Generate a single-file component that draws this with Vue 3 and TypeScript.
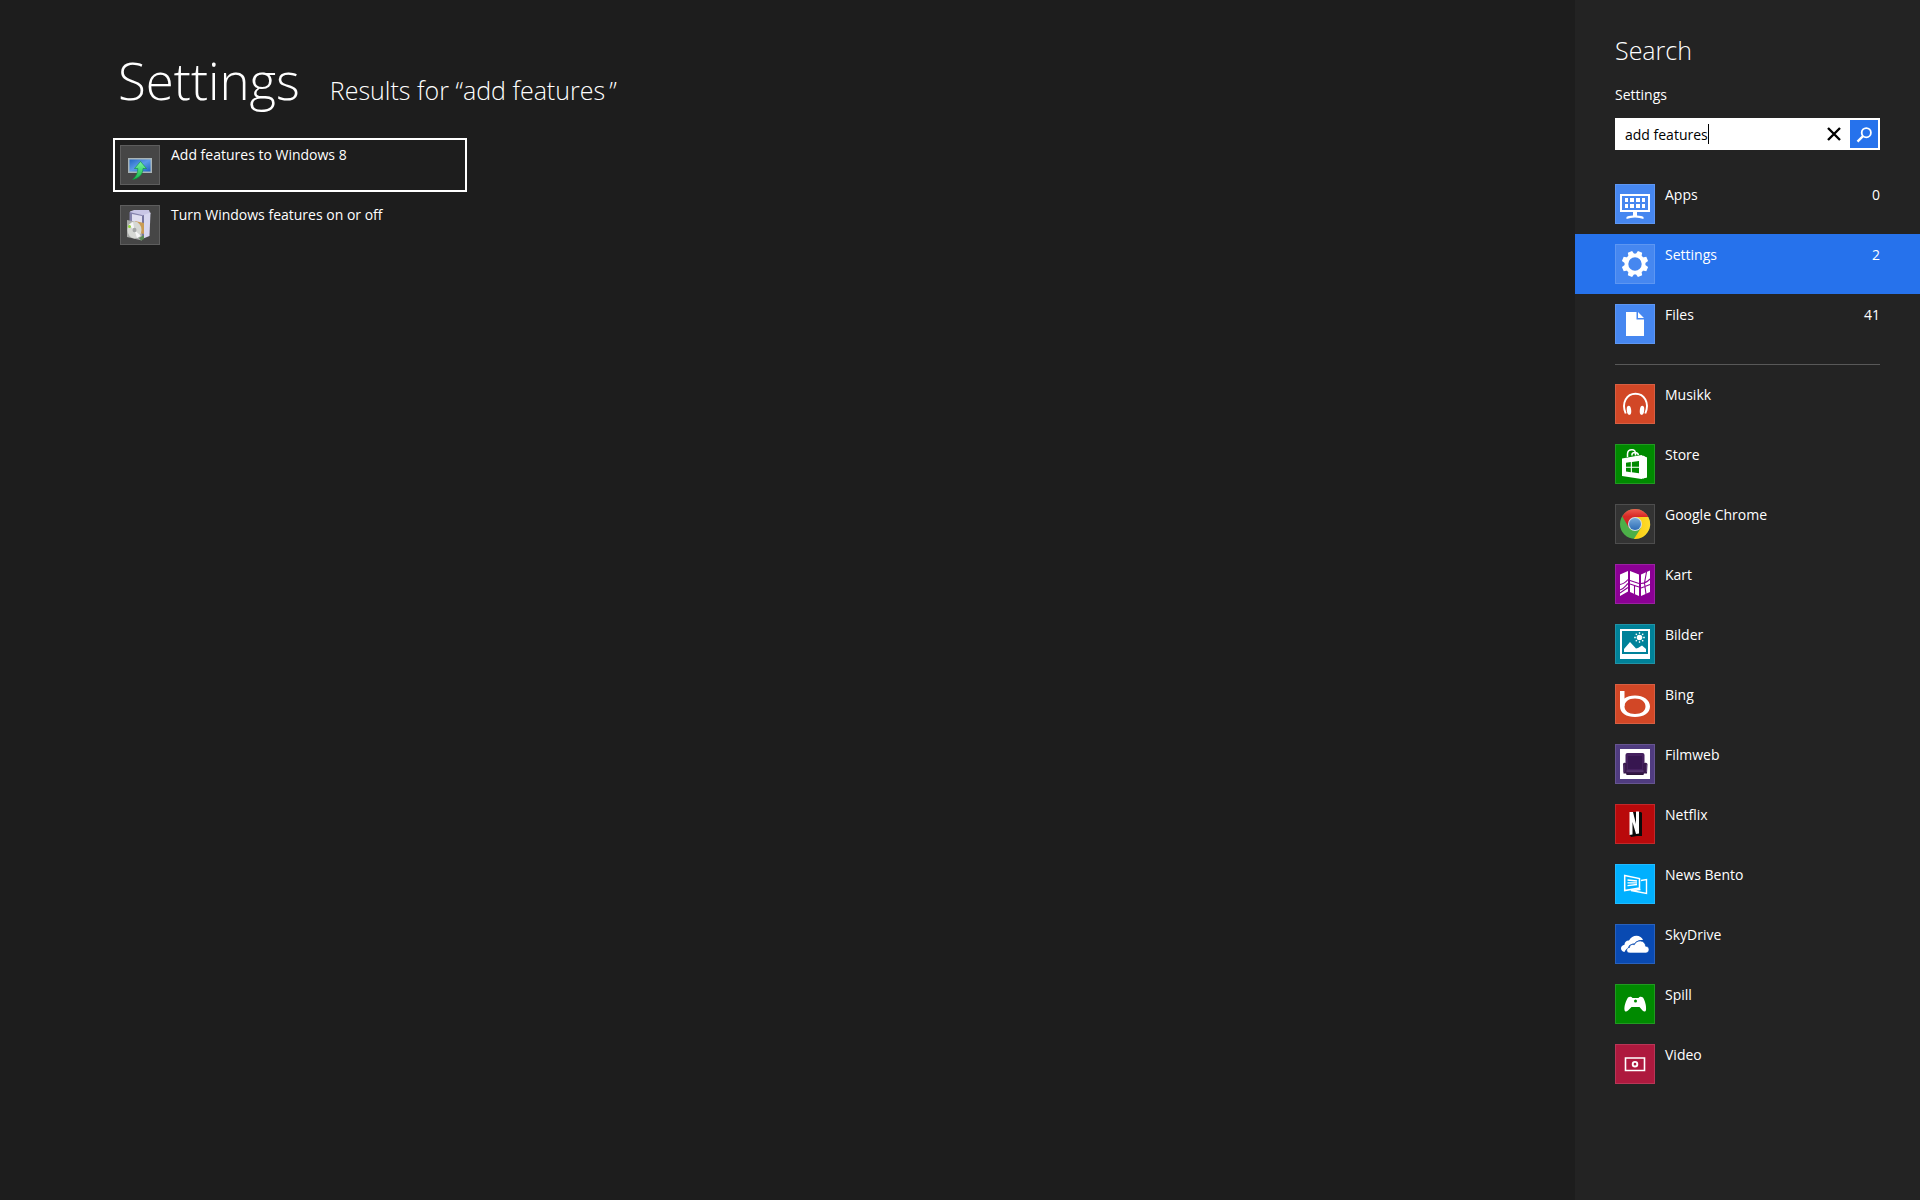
<script setup lang="ts">
import { computed, ref } from 'vue'

interface Entry {
  id: string
  label: string
  color: string
  count?: number
}

const query = ref('add features')
const selected = ref('settings')
const activeResult = ref('add')

const scopes: Entry[] = [
  { id: 'apps', label: 'Apps', color: '#4687f0', count: 0 },
  { id: 'settings', label: 'Settings', color: '#4687f0', count: 2 },
  { id: 'files', label: 'Files', color: '#4687f0', count: 41 },
]

const apps: Entry[] = [
  { id: 'musikk', label: 'Musikk', color: '#d24726' },
  { id: 'store', label: 'Store', color: '#008a00' },
  { id: 'chrome', label: 'Google Chrome', color: '#333333' },
  { id: 'kart', label: 'Kart', color: '#8c0095' },
  { id: 'bilder', label: 'Bilder', color: '#008299' },
  { id: 'bing', label: 'Bing', color: '#d24726' },
  { id: 'filmweb', label: 'Filmweb', color: '#503c80' },
  { id: 'netflix', label: 'Netflix', color: '#b9090b' },
  { id: 'news', label: 'News Bento', color: '#00b0ff' },
  { id: 'skydrive', label: 'SkyDrive', color: '#094ab2' },
  { id: 'spill', label: 'Spill', color: '#008a00' },
  { id: 'video', label: 'Video', color: '#ae193e' },
]

const results: Entry[] = [
  { id: 'add', label: 'Add features to Windows 8', color: '#464646' },
  { id: 'turn', label: 'Turn Windows features on or off', color: '#464646' },
]

const groups = computed(() => [scopes, apps])
const teeth = [22.5, 67.5, 112.5, 157.5, 202.5, 247.5, 292.5, 337.5]
const rays = [0, 45, 90, 135, 180, 225, 270, 315]
</script>

<template>
  <div class="screen">
    <main class="results">
      <header class="heading">
        <h1>Settings</h1>
        <p>Results for “{{ query }}&#8201;”</p>
      </header>
      <ul class="result-list">
        <li v-for="r in results" :key="r.id">
          <button
            type="button"
            class="result"
            :class="{ active: activeResult === r.id }"
            @click="activeResult = r.id"
          >
            <span class="tile" :style="{ backgroundColor: r.color }">
              <svg v-if="r.id === 'add'" viewBox="0 0 40 40" aria-hidden="true">
                <defs>
                  <linearGradient id="screen-blue" x1="0" y1="0" x2="1" y2="1">
                    <stop offset="0" stop-color="#2467c4" />
                    <stop offset=".5" stop-color="#5b9be8" />
                    <stop offset="1" stop-color="#1f62c0" />
                  </linearGradient>
                  <linearGradient id="arrow-green" x1="0" y1="0" x2="0" y2="1">
                    <stop offset="0" stop-color="#7af5a0" />
                    <stop offset="1" stop-color="#12b84a" />
                  </linearGradient>
                </defs>
                <rect x="8" y="13" width="24" height="15" fill="#a9b4b6" />
                <rect x="9.500" y="14.500" width="21" height="12" fill="url(#screen-blue)" />
                <path d="M20.500 16.500 26.500 23.500H23C23 29 19 33.500 12.500 34.500 16 31.500 18 28 17.800 23.500H14.500Z" fill="url(#arrow-green)" stroke="#0d8f3a" stroke-width=".6" />
              </svg>
              <svg v-else viewBox="0 0 40 40" aria-hidden="true">
                <path d="M10 6.500 14 5H29L30.500 9 24 12H10Z" fill="#c9c6e6" />
                <path d="M9.500 7 24 10.500V33L9.500 30Z" fill="#8482ac" />
                <path d="M12 9 22 11V28H12Z" fill="#e0def0" />
                <path d="M22 10.500 30.500 7.500 29.500 31 22 34Z" fill="#d8d7f0" />
                <path d="M22 10.500 24 10V33L22 34Z" fill="#7775a0" />
                <path d="M7 15 22 18V35.500L7 32Z" fill="#a8aaa8" />
                <path d="M15 16 24 18V29L20 28Z" fill="#c99b54" />
                <ellipse cx="14.500" cy="25" rx="7" ry="8.500" fill="#d6d8d4" />
                <path d="M14.500 25 8.500 20 13 17ZM14.500 25 21 31 17 33Z" fill="#f5f5f5" />
                <ellipse cx="14.500" cy="25" rx="2" ry="2.300" fill="#a4a6a6" />
                <circle cx="9.500" cy="21.500" r="1.500" fill="#8fd43a" />
                <path d="M19 33 24 30V34L21 35.500Z" fill="#5a8a55" />
              </svg>
            </span>
            <span class="label">{{ r.label }}</span>
          </button>
        </li>
      </ul>
    </main>

    <aside class="pane">
      <h2>Search</h2>
      <label for="query" class="scope">Settings</label>
      <form class="box" role="search" @submit.prevent>
        <input id="query" v-model="query" type="text" autocomplete="off" spellcheck="false" />
        <span v-if="query" class="caret"></span>
        <button type="button" class="clear" aria-label="Clear" @click="query = ''">
          <svg viewBox="0 0 16 16" aria-hidden="true">
            <path d="M2 2 14 14M14 2 2 14" stroke="#000" stroke-width="2.400" fill="none" />
          </svg>
        </button>
        <button type="submit" class="go" aria-label="Search">
          <svg viewBox="0 0 28 28" aria-hidden="true">
            <circle cx="16.300" cy="12.700" r="4.600" fill="none" stroke="#fff" stroke-width="1.800" />
            <path d="M13 16.200 7.500 21.600" stroke="#fff" stroke-width="2.400" />
          </svg>
        </button>
      </form>

      <ul v-for="(group, g) in groups" :key="g" class="entries">
        <li v-for="e in group" :key="e.id">
          <button
            type="button"
            class="entry"
            :class="{ selected: selected === e.id }"
            @click="selected = e.id"
          >
            <span class="tile" :style="{ backgroundColor: e.color }">
              <svg v-if="e.id === 'apps'" viewBox="0 0 40 40" fill="#fff" aria-hidden="true">
                <path fill-rule="evenodd" d="M5 10H35V28H5ZM7 12V26H33V12Z" />
                <path d="M10 14h3v4h-3zM15 14h4v4h-4zM21 14h4v4h-4zM27 14h3v4h-3zM10 20h3v4h-3zM15 20h4v4h-4zM21 20h4v4h-4zM27 20h3v4h-3z" />
                <path d="M18 28H22V31.500C25 32 28 32 28.500 33V35C26 34.500 23 33.500 20 33.500S14 34.500 11.500 35V33C12 32 15 32 18 31.500Z" />
              </svg>
              <svg v-else-if="e.id === 'settings'" viewBox="0 0 40 40" fill="#fff" aria-hidden="true">
                <circle cx="20" cy="20" r="8.600" fill="none" stroke="#fff" stroke-width="3.800" />
                <path v-for="t in teeth" :key="t" d="M16.900 10.500 17.700 6.800H22.300L23.100 10.500Z" :transform="`rotate(${t} 20 20)`" />
              </svg>
              <svg v-else-if="e.id === 'files'" viewBox="0 0 40 40" fill="#fff" aria-hidden="true">
                <path d="M11 8H21.500V15.500H29V32H11ZM23 8 29 14H23Z" />
              </svg>
              <svg v-else-if="e.id === 'musikk'" viewBox="0 0 40 40" fill="#fff" aria-hidden="true">
                <path d="M10.700 29.500C6 18.500 12 9.800 20.500 9.800S35 18.500 30.300 29.500" fill="none" stroke="#fff" stroke-width="1.900" />
                <ellipse cx="14" cy="26.300" rx="2.200" ry="4.600" transform="rotate(-6 14 26.300)" />
                <ellipse cx="27" cy="26.300" rx="2.200" ry="4.600" transform="rotate(6 27 26.300)" />
              </svg>
              <svg v-else-if="e.id === 'store'" viewBox="0 0 40 40" fill="#fff" aria-hidden="true">
                <path d="M12.500 13V10C12.500 7 14.500 5.800 17 5.800S20.500 7 20.500 10V11.500M17 11.500V10.500C17 9 18.500 8.500 20 8.500S23.300 9.500 23.300 11" fill="none" stroke="#fff" stroke-width="1.500" />
                <path d="M7 14.500 26.500 11V35L7 32ZM28 11.500 32 14V33L28 34.500Z" />
                <path d="M26 11 32 13.500V33.500L26 35Z" />
                <path d="M11 18.800 15.800 18.100V22.700H11ZM16.900 18 24 17V22.700H16.900ZM11 23.800H15.800V28.200L11 27.500ZM16.900 23.800H24V29.300L16.900 28.300Z" fill="#008a00" />
              </svg>
              <svg v-else-if="e.id === 'chrome'" viewBox="0 0 40 40" aria-hidden="true">
                <defs>
                  <linearGradient id="chrome-red" x1="0" y1="0" x2="0" y2="1">
                    <stop offset="0" stop-color="#ef5c50" />
                    <stop offset=".4" stop-color="#d82a26" />
                    <stop offset="1" stop-color="#cf2020" />
                  </linearGradient>
                  <linearGradient id="chrome-yellow" x1="0" y1="0" x2="1" y2="0">
                    <stop offset="0" stop-color="#f9cb0c" />
                    <stop offset="1" stop-color="#fedc2e" />
                  </linearGradient>
                  <linearGradient id="chrome-blue" x1="0" y1="0" x2="0" y2="1">
                    <stop offset="0" stop-color="#75a9da" />
                    <stop offset="1" stop-color="#2d6cb5" />
                  </linearGradient>
                </defs>
                <circle cx="20" cy="20" r="15" fill="#4caf48" />
                <path d="M20 20 26.200 23.500 18.900 35A15 15 0 0 0 33.300 13L20 13Z" fill="url(#chrome-yellow)" />
                <path d="M20 20 13.800 23.500 7.200 12.200A15 15 0 0 1 33.300 13H20Z" fill="url(#chrome-red)" />
                <circle cx="20" cy="20" r="7" fill="#d5dde6" />
                <circle cx="20" cy="20" r="6" fill="url(#chrome-blue)" />
              </svg>
              <svg v-else-if="e.id === 'kart'" viewBox="0 0 40 40" fill="#fff" aria-hidden="true">
                <path d="M5 10.500 13 7V27.500L5 32ZM15 7 24 10.500V32L15 28ZM26 10.500 35 6.500V28L26 32Z" />
                <path d="M5 20.500C8 20 11 18 13 15.500M5 26C9 25 11 21 13 19.500M5 29 13 23.500M15 16.500 24 19.500M15 20 24 23M19.500 21.500V30M26 19.500C29 19.500 32 18 35 15M26 24 35 20.500M31.500 8 29.500 19 31 30" fill="none" stroke="#8c0095" stroke-width="1.100" />
              </svg>
              <svg v-else-if="e.id === 'bilder'" viewBox="0 0 40 40" fill="#fff" aria-hidden="true">
                <path fill-rule="evenodd" d="M5 5H35V35H5ZM7 7V30H33V7Z" />
                <path d="M9 28V25L15 18 21 24.500 23 24 27 21.500 31 25V28Z" />
                <circle cx="24.500" cy="13.500" r="2.800" />
                <path v-for="t in rays" :key="t" d="M24.500 8.200V9.800" stroke="#fff" stroke-width="1.300" :transform="`rotate(${t} 24.500 13.500)`" />
              </svg>
              <svg v-else-if="e.id === 'bing'" viewBox="0 0 40 40" fill="none" aria-hidden="true">
                <path d="M5 7H9.500V22H5Z" fill="#fff" />
                <path fill="#fff" fill-rule="evenodd" d="M20 11.500C28.500 11.500 35 16 35 22.500S28.500 33 20 33 5 29 5 22.500 11.500 11.500 20 11.500ZM20 14.500C13.500 14.500 9.500 18 9.500 22.500S13.500 30 20 30 30.500 27 30.500 22.500 26.500 14.500 20 14.500Z" />
              </svg>
              <svg v-else-if="e.id === 'filmweb'" viewBox="0 0 40 40" aria-hidden="true">
                <path d="M5 5H35V35H5Z" fill="#fff" />
                <path d="M12.500 9H27.500Q29.500 9 29.500 11V28H10.500V11Q10.500 9 12.500 9Z" fill="#45205f" />
                <path d="M13 12H27V25H13Z" fill="#371650" />
                <path d="M8 20Q8.500 18.500 10 18.800 11.800 19 12 20.500V26H28V20.500Q28.200 19 30 18.800 31.500 18.500 32.500 20L32 29.500H29L28.500 31H11.500L11 29.500H8.500Z" fill="#3a1a4e" />
                <path d="M11.500 26.300H28.500V27.800H11.500Z" fill="#5b3a75" />
                <path d="M12 29.500H28V31H12Z" fill="#2b1538" />
                <path d="M9 20.500V28M31.500 20.500V28" stroke="#5b3a75" />
              </svg>
              <svg v-else-if="e.id === 'netflix'" viewBox="0 0 40 40" aria-hidden="true">
                <path d="M18 8H26L27 9V32H22L16 33 14.500 30Z" fill="#0b0b0b" />
                <path d="M14.500 8H18L21 20V7.500H24V29.500L21 30 17.500 18V30.500L14.500 31Z" fill="#fff" />
              </svg>
              <svg v-else-if="e.id === 'news'" viewBox="0 0 40 40" fill="none" stroke="#fff" aria-hidden="true">
                <path d="M9.700 11.500 24.500 14.500V24L9.700 26.500Z" stroke-width="1.500" />
                <path d="M26 16.500 31.500 15.500V29.500L16 26.500 25.500 25.500" stroke-width="1.400" />
                <path d="M12.500 16 22 17M12.500 18.800H22M12.500 21.700 22 20.500" stroke-width="1.300" />
              </svg>
              <svg v-else-if="e.id === 'skydrive'" viewBox="0 0 40 40" fill="#fff" aria-hidden="true">
                <path d="M9.500 28C7 27.500 6 26 6 24.300S7.500 21 9.500 20.800C9.500 18 11.500 16.300 14 16.500 15.500 13.500 18.500 11.800 21.500 11.800S27 13.500 28 16C24 15.500 21 17 19.500 19.500 15.500 19.500 13 22 13 24.500 11 25 10 26.500 9.500 28Z" />
                <path d="M15 29C12.500 29 11.500 27.500 11.700 26S13 23.500 14.500 23.500C14.500 21 17 19.800 19.300 20.700 20.500 18 23 16.800 25.500 17 28.500 17.200 30.500 19.500 30.600 22.200 33 22.300 34 23.800 34 25.700S32.500 29 30.500 29Z" stroke="#094ab2" stroke-width=".6" />
              </svg>
              <svg v-else-if="e.id === 'spill'" viewBox="0 0 40 40" fill="#fff" aria-hidden="true">
                <path d="M13 13.500C14.500 12.500 16.500 12.500 17.500 14H23.500C24.500 12.500 26.500 12.500 28 13.500 30 16.500 31.500 22 31 26 30.500 28 29 27.800 27.500 26.500L24.500 23H16.500L13 26.500C11.500 27.800 10 28 9.500 26 9 22 11 16.500 13 13.500Z" />
                <circle cx="20.500" cy="17" r="1.500" fill="#008a00" />
              </svg>
              <svg v-else viewBox="0 0 40 40" fill="none" stroke="#fff" aria-hidden="true">
                <path d="M10.500 14H29.500V26.500H10.500Z" stroke-width="1.600" />
                <circle cx="20" cy="20.200" r="2.300" stroke-width="1.900" />
              </svg>
            </span>
            <span class="label">{{ e.label }}</span>
            <span v-if="e.count !== undefined" class="count">{{ e.count }}</span>
          </button>
        </li>
      </ul>
    </aside>
  </div>
</template>

<style>
body {
  margin: 0;
  background: #1d1d1d;
}
</style>

<style scoped>
.screen {
  display: flex;
  min-height: 100vh;
  background: #1d1d1d;
  color: #fff;
  font: 14px/20px "Segoe UI", "Open Sans", "Noto Sans", sans-serif;
}

h1,
h2,
p,
ul {
  margin: 0;
  padding: 0;
}

h1,
h2,
p {
  font-weight: 300;
}

ul {
  list-style: none;
}

button,
input {
  border: 0;
  padding: 0;
  background: none;
  color: inherit;
  font: inherit;
  text-align: left;
}

svg {
  display: block;
  width: 100%;
  height: 100%;
}

.results {
  flex: 1;
  padding: 40px 113px 0;
}

.heading {
  display: flex;
  align-items: baseline;
  gap: 30px;
  padding: 0 5px;
  height: 98px;
  white-space: nowrap;
}

h1 {
  font-size: 51px;
  line-height: 80px;
}

.heading p,
h2 {
  font-size: 25px;
  line-height: 40px;
}

.result-list {
  display: grid;
  grid-template-columns: 354px;
  gap: 6px;
}

.result {
  display: flex;
  gap: 11px;
  box-sizing: border-box;
  width: 100%;
  height: 54px;
  padding: 5px;
  border: 2px solid transparent;
}

.result.active {
  border-color: #fff;
}

.tile {
  flex: none;
  position: relative;
  width: 40px;
  height: 40px;
}

.tile::after {
  content: "";
  position: absolute;
  inset: 0;
  border: 1px solid rgba(255, 255, 255, 0.13);
}

.pane {
  width: 345px;
  background: #232323;
  padding-top: 30px;
  box-sizing: border-box;
}

h2,
.scope,
.box {
  display: block;
  margin: 0 40px;
}

.scope {
  margin-top: 15px;
}

.box {
  position: relative;
  display: flex;
  align-items: center;
  margin-top: 13px;
  margin-bottom: 24px;
  height: 28px;
  padding: 2px;
  background: #fff;
  color: #000;
}

.box input {
  flex: 1;
  min-width: 0;
  height: 28px;
  padding: 0 8px;
  outline: 0;
}

.caret {
  position: absolute;
  left: 93px;
  top: 6px;
  width: 1px;
  height: 20px;
  background: #000;
}

.clear {
  width: 16px;
  height: 16px;
  margin-right: 8px;
}

.go {
  width: 28px;
  height: 28px;
  background: #2672ec;
}

.entry {
  display: flex;
  gap: 10px;
  width: 100%;
  height: 60px;
  padding: 10px 40px;
  line-height: 22px;
}

.entry.selected {
  background: #2672ec;
}

.count {
  margin-left: auto;
}

.entries + .entries::before {
  content: "";
  display: block;
  height: 1px;
  margin: 10px 40px 9px;
  background: #585858;
}
</style>
